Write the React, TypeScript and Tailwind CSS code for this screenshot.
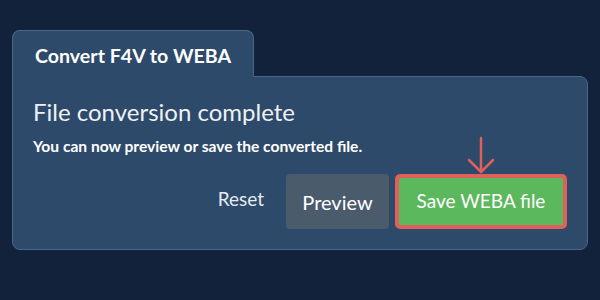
import React from "react";

export default function App() {
  return (
    <div
      className="w-[600px] h-[300px] bg-[#11223a] pt-[30px] px-[12px]"
      style={{ fontFamily: "Lato, 'Noto Sans', sans-serif" }}
    >
      <div className="relative z-10 -mb-px w-[242px] h-[47px] bg-[#2d4a6a] border border-b-0 border-[#4b6787] rounded-t-[8px] pl-[22px] pt-[3px] flex items-center">
        <span className="text-[19.6px] font-bold text-white leading-none">Convert F4V to WEBA</span>
      </div>
      <div className="h-[174px] bg-[#2d4a6a] border border-[#4b6787] rounded-[8px] rounded-tl-none px-[20px] pt-[19px] flex flex-col">
        <h1 className="text-[24px] leading-[32px] text-[#eef1f4] font-normal">File conversion complete</h1>
        <p className="mt-[9px] text-[15.6px] leading-[18px] font-bold text-white">You can now preview or save the converted file.</p>
        <div className="mt-auto mb-[20px] flex items-center justify-end">
          <span className="text-[19px] text-[#e6eaee] mr-[22px] -mt-[5px]">Reset</span>
          <div className="w-[103px] h-[55px] rounded-[4px] bg-[#4a5b6c] flex items-center justify-center text-[20px] text-white">
            Preview
          </div>
          <div className="relative ml-[6px] w-[172px] h-[55px] rounded-[5px] border-[4px] border-[#df5f5b] bg-[#5cb85c] flex items-center justify-center text-[19px] text-white">
            Save WEBA file
            <svg
              className="absolute left-1/2 -translate-x-1/2 -top-[42px]"
              width="30"
              height="40"
              viewBox="0 0 30 40"
              fill="none"
              stroke="#df5f5b"
              strokeWidth="2.5"
              strokeLinecap="round"
              strokeLinejoin="round"
            >
              <path d="M15 2 V36" />
              <path d="M3 24 L15 36 L27 24" />
            </svg>
          </div>
        </div>
      </div>
    </div>
  );
}
